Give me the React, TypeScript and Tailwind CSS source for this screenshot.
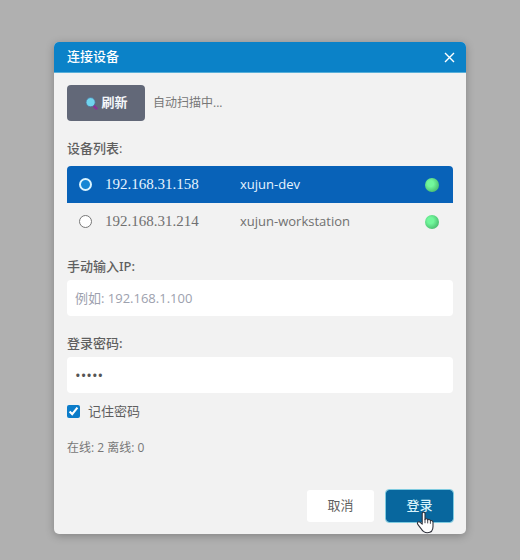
import { useState } from 'react';
import type { ChangeEvent, SVGProps } from 'react';
import { cva } from 'class-variance-authority';
import clsx from 'clsx';

// --- Types ---
interface Device {
  ip: string;
  name: string;
  online: boolean;
}

const devices: Device[] = [
  { ip: '192.168.31.158', name: 'xujun-dev', online: true },
  { ip: '192.168.31.214', name: 'xujun-workstation', online: true },
];

// --- Icons ---
const SearchIcon = (props: SVGProps<SVGSVGElement>) => (
  <svg viewBox="0 0 14 14" fill="none" aria-hidden="true" {...props}>
    <path d="M9 9.2 12.4 12.4" stroke="#8a3296" strokeWidth="2.6" strokeLinecap="round" />
    <circle cx="6.6" cy="6.2" r="4.6" fill="#70d4ee" stroke="#4f6c92" strokeWidth="0.8" />
  </svg>
);

const CloseIcon = (props: SVGProps<SVGSVGElement>) => (
  <svg viewBox="0 0 12 12" fill="none" stroke="currentColor" strokeWidth="1.5" aria-hidden="true" {...props}>
    <path d="M1.1 1.1 10.9 10.9M10.9 1.1 1.1 10.9" />
  </svg>
);

const HandCursor = (props: SVGProps<SVGSVGElement>) => (
  <svg viewBox="0 0 19 23" aria-hidden="true" {...props}>
    <path
      d="M6.2 2.6c0-2 2.8-2 2.8 0v6c.6-1.3 2.6-1 2.7.4.8-1 2.6-.5 2.7.8 1-.7 2.6-.1 2.6 1.4v4.4c0 4-2 6.2-5.6 6.2-3.4 0-5-1.7-6.6-4.5l-3-4c-1.3-1.8.8-3.4 2.4-2l2 1.8z"
      fill="#fff"
      stroke="#30323c"
      strokeWidth="1.1"
      strokeLinejoin="round"
    />
    <path d="M9 8.6v3.2M11.7 9.2v2.8M14.4 10v2.4" stroke="#30323c" strokeWidth="0.9" strokeLinecap="round" />
  </svg>
);

// --- Form parts ---
const actionButton = cva('h-8 w-[67px] rounded-[3px] text-[13px]', {
  variants: {
    intent: {
      primary: 'bg-[#08679e] font-medium text-[#d8f3fb] outline-1 outline-[#7fcbe0]',
      plain: 'bg-white text-[#5f5f5f]',
    },
  },
});

const TextField = ({
  id,
  label,
  type,
  value,
  placeholder,
  onChange,
}: {
  id: string;
  label: string;
  type: 'text' | 'password';
  value: string;
  placeholder?: string;
  onChange: (value: string) => void;
}) => (
  <div className="flex flex-col gap-1">
    <label
      htmlFor={id}
      className="font-['Noto_Sans','Noto_Sans_CJK_SC',sans-serif] text-[13px] leading-5 font-medium text-[#5f5f5f]"
    >
      {label}
    </label>
    <input
      id={id}
      type={type}
      value={value}
      placeholder={placeholder}
      onChange={(e: ChangeEvent<HTMLInputElement>) => onChange(e.target.value)}
      className={clsx(
        'h-9 w-full rounded-sm bg-white px-2 text-[#555] outline-none placeholder:text-[#9da1ae]',
        type === 'password' ? 'text-[15px]' : 'text-[13px]'
      )}
    />
  </div>
);

const DeviceRow = ({ device, selected, onSelect }: { device: Device; selected: boolean; onSelect: () => void }) => (
  <label
    className={clsx(
      'grid h-[37px] grid-cols-[26px_135px_1fr_auto] items-center pr-[14px] pl-3',
      selected ? 'bg-[#0862b8] text-[#e6f4ff]' : 'text-[#707070]'
    )}
  >
    <input
      type="radio"
      name="device"
      checked={selected}
      onChange={onSelect}
      className={clsx(
        'size-[13px] appearance-none rounded-full',
        selected ? 'border-2 border-[#d9f4ff] bg-[#1486d4]' : 'border border-[#777] bg-white'
      )}
    />
    <span className="font-['Liberation_Serif',serif] text-[15px]">{device.ip}</span>
    <span className={clsx('text-[13px]', selected && 'font-medium')}>{device.name}</span>
    <span
      className={clsx(
        'size-[14px] rounded-full',
        device.online
          ? 'bg-[radial-gradient(circle_at_40%_40%,#72f79c_25%,#52c978_65%,#48a765)]'
          : 'bg-[#999]'
      )}
    />
  </label>
);

export default function App() {
  const [selectedIp, setSelectedIp] = useState(devices[0].ip);
  const [manualIp, setManualIp] = useState('');
  const [password, setPassword] = useState('admin');
  const [remember, setRemember] = useState(true);

  const online = devices.filter((d) => d.online).length;

  return (
    <main className="min-h-screen bg-[#b0b0b0] px-[54px] pt-[42px] pb-[26px] font-['Open_Sans','Noto_Sans_CJK_SC',sans-serif]">
      <section
        role="dialog"
        aria-labelledby="dialog-title"
        className="overflow-hidden rounded-[5px] bg-[#f2f2f2] shadow-[0_2px_8px_rgba(0,0,0,0.25)]"
      >
        <header className="flex h-[31px] items-center justify-between border-b border-[#58afd9] bg-[#0b82c8] pr-[11px] pl-[13px] text-white">
          <h1 id="dialog-title" className="text-[13px] font-medium">
            连接设备
          </h1>
          <button type="button" aria-label="关闭">
            <CloseIcon className="size-[11px]" />
          </button>
        </header>

        <form className="flex flex-col px-[13px] py-3" onSubmit={(e) => e.preventDefault()}>
          <div className="flex items-center gap-2">
            <button
              type="button"
              className="flex h-9 w-[78px] items-center justify-center gap-[3px] rounded-sm bg-[#626878] text-[13px] font-semibold text-[#f4f6fa]"
            >
              <SearchIcon className="size-[14px]" />
              刷新
            </button>
            <span className="text-xs text-[#777]">自动扫描中...</span>
          </div>

          <fieldset className="mt-[17px]">
            <legend className="mb-2 text-[13px] leading-5 font-medium text-[#5f5f5f]">设备列表:</legend>
            <div className="overflow-hidden rounded-sm">
              {devices.map((device) => (
                <DeviceRow
                  key={device.ip}
                  device={device}
                  selected={device.ip === selectedIp}
                  onSelect={() => setSelectedIp(device.ip)}
                />
              ))}
            </div>
          </fieldset>

          <div className="mt-4 flex flex-col gap-[17px]">
            <TextField
              id="manual-ip"
              label="手动输入IP:"
              type="text"
              value={manualIp}
              placeholder="例如: 192.168.1.100"
              onChange={setManualIp}
            />
            <TextField id="password" label="登录密码:" type="password" value={password} onChange={setPassword} />
          </div>

          <label className="mt-2 flex items-center gap-2 text-[13px] leading-5 text-[#5f5f5f]">
            <input
              type="checkbox"
              checked={remember}
              onChange={(e) => setRemember(e.target.checked)}
              className="size-[13px] accent-[#0b7cc9]"
            />
            记住密码
          </label>

          <p className="mt-[17px] text-xs leading-5 text-[#777]">
            在线: {online} 离线: {devices.length - online}
          </p>

          <div className="mt-8 flex justify-end gap-3">
            <button type="button" className={actionButton({ intent: 'plain' })}>
              取消
            </button>
            <div className="relative">
              <button type="submit" className={actionButton({ intent: 'primary' })}>
                登录
              </button>
              <HandCursor className="pointer-events-none absolute top-[21px] left-[30px] h-[23px] w-[19px]" />
            </div>
          </div>
        </form>
      </section>
    </main>
  );
}
